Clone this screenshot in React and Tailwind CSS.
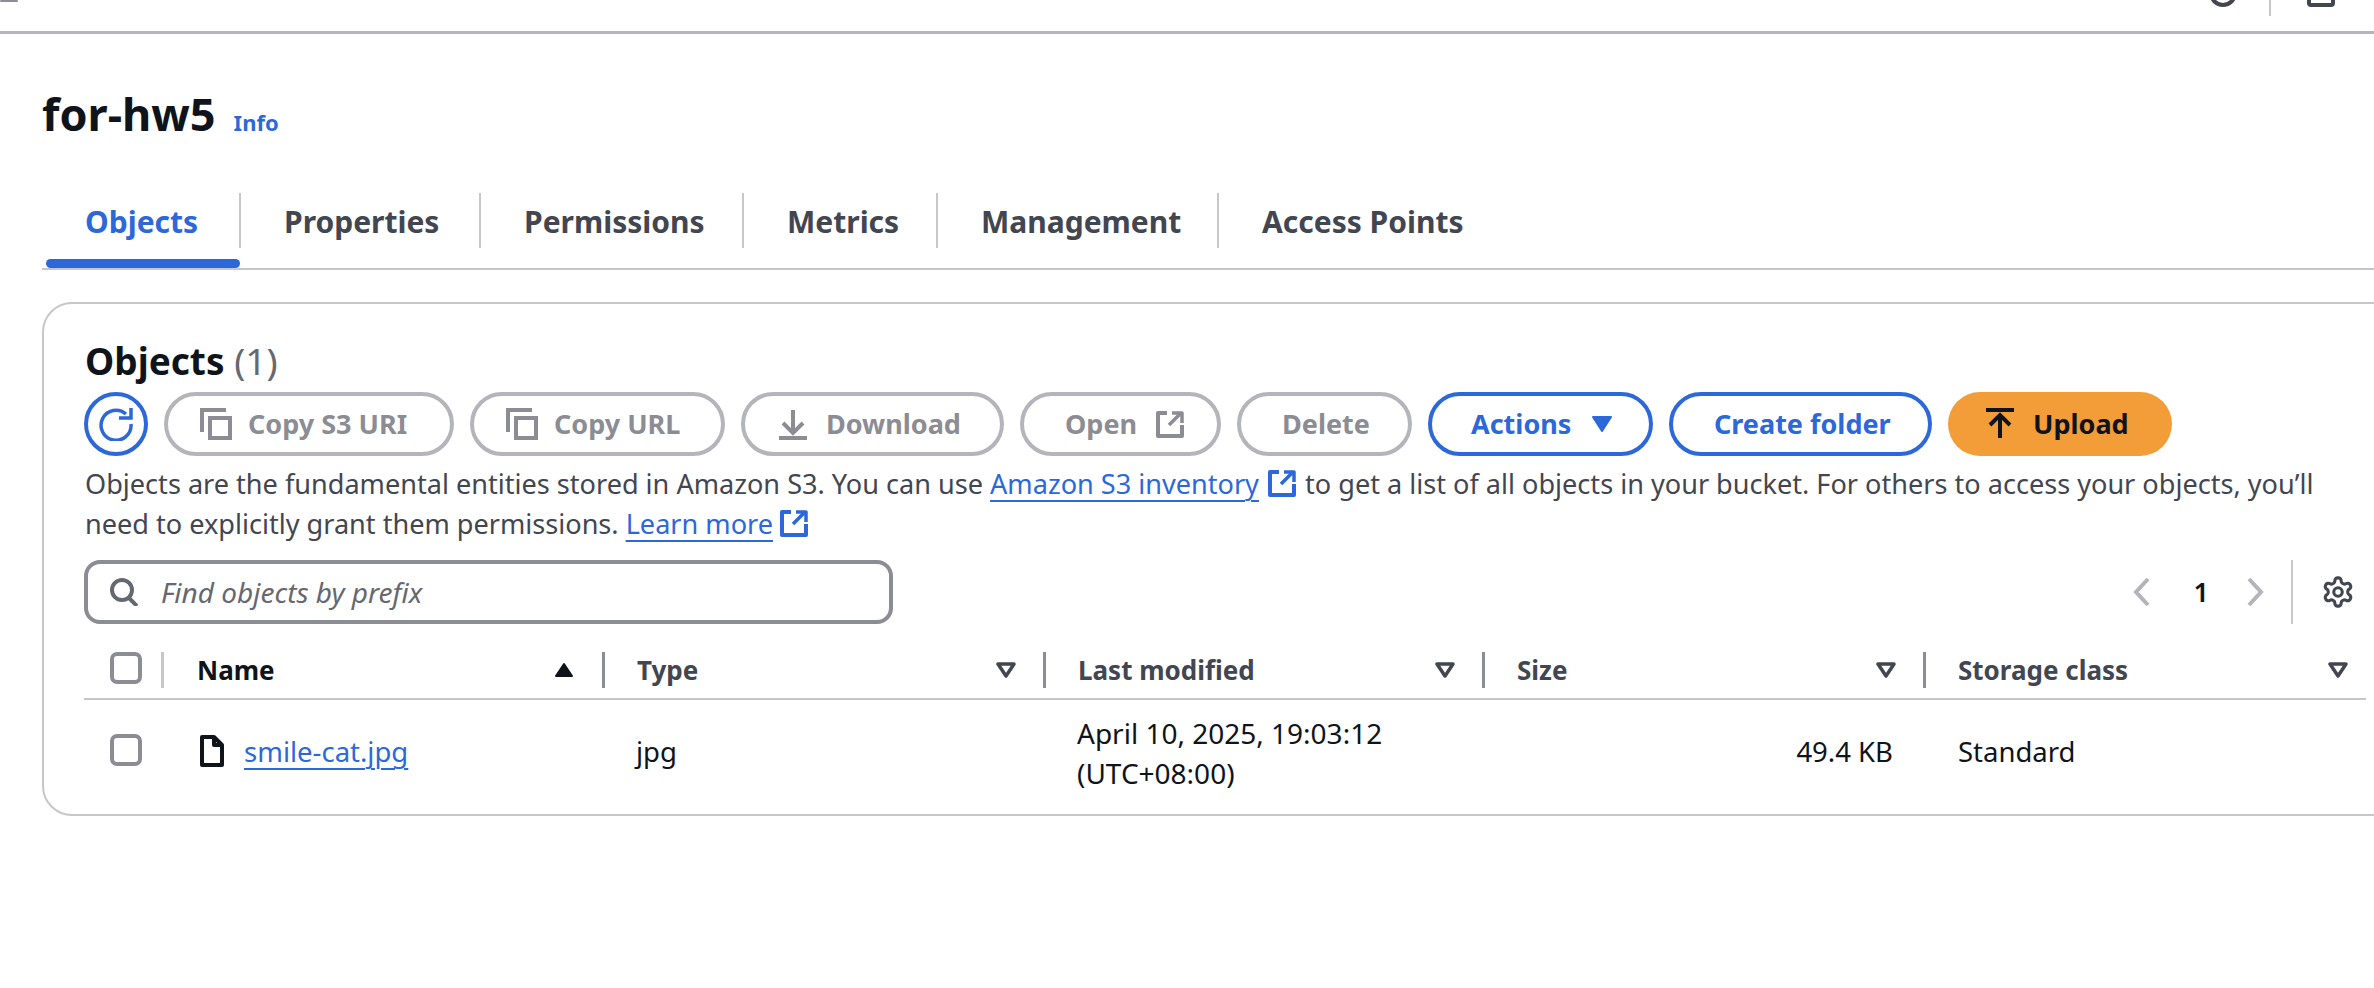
const FONT = "font-['Noto_Sans',sans-serif]"

// AWS-style external link box
function ExternalIcon({ className = '' }) {
  return (
    <svg viewBox="0 0 28 28" className={className} fill="none" stroke="currentColor" strokeWidth="4" strokeLinejoin="round">
      <path d="M11 3H2v23h24V15" />
      <path d="M16 3h10v10" strokeWidth="3.5" />
      <path d="M25 3L13 15" strokeWidth="3.5" />
    </svg>
  )
}

function CopyIcon() {
  return (
    <svg viewBox="0 0 32 32" className="w-8 h-8 shrink-0" fill="none" stroke="currentColor" strokeWidth="4">
      <path d="M2 24V2h24" />
      <rect x="10" y="10" width="20" height="20" />
    </svg>
  )
}

function Caret() {
  return (
    <svg viewBox="0 0 20 16" className="w-5 h-4" fill="none" stroke="#424650" strokeWidth="3.5" strokeLinejoin="round">
      <path d="M2 2h16l-8 12z" />
    </svg>
  )
}

function Btn({ children, className, disabled }) {
  const cls = disabled
    ? 'border-[#b4b4bb] text-[#8c8c94]'
    : 'border-[#2c68d9] text-[#2c68d9]'
  return (
    <button className={`h-16 rounded-full border-4 bg-white flex items-center text-[27px] font-bold shrink-0 ${cls} ${className}`}>
      {children}
    </button>
  )
}

function Tab({ label, active, width, divider = true }) {
  return (
    <div className={`relative h-[75px] pb-[20px] flex items-center ${width}`}>
      <div className={`flex-1 h-[55px] flex items-center pl-[43px] pt-[2px] text-[30px] font-bold ${divider ? 'border-r-2 border-[#c6c6cd]' : ''} ${active ? 'text-[#2c68d9]' : 'text-[#424650]'}`}>
        {label}
      </div>
      {active && <div className="absolute left-[4px] right-[1px] bottom-0 h-[9px] rounded-full bg-[#2c68d9]" />}
    </div>
  )
}

function HeaderCell({ label, className }) {
  return (
    <div className={`h-9 flex items-center justify-between pl-[32px] border-l-[3px] border-[#8c8c94] text-[#424650] font-bold text-[26px] shrink-0 ${className}`}>
      <span>{label}</span>
      <Caret />
    </div>
  )
}

export default function App() {
  return (
    <div className={`w-[2374px] h-[988px] bg-white overflow-hidden ${FONT}`}>
      {/* top bar, cut off by the crop */}
      <div className="h-[34px] border-b-[3px] border-[#b4b4bb] flex items-start overflow-hidden pr-[39px]">
        <div className="w-[18px] h-[2px] rounded-full bg-[#8c8c94]" />
        <div className="flex-1" />
        <div className="w-[28px] h-[28px] -mt-[21px] rounded-full border-[4px] border-[#424650]" />
        <div className="w-[2px] h-[16px] bg-[#c6c6cd] ml-[32px]" />
        <div className="w-[28px] h-[28px] -mt-[21px] rounded-[4px] border-[4px] border-[#424650] ml-[36px]" />
      </div>

      <div className="pl-[42px]">
        {/* title */}
        <div className="flex items-baseline gap-[18px] mt-[50px] h-[60px]">
          <h1 className="text-[45px] font-bold text-[#0f141a] leading-[60px]">for-hw5</h1>
          <span className="text-[22px] font-bold text-[#2c68d9]">Info</span>
        </div>

        {/* tabs */}
        <div className="flex mt-[49px] border-b-[2px] border-[#c6c6cd] h-[77px]">
          <Tab label="Objects" active width="w-[199px]" />
          <Tab label="Properties" width="w-[240px]" />
          <Tab label="Permissions" width="w-[263px]" />
          <Tab label="Metrics" width="w-[194px]" />
          <Tab label="Management" width="w-[281px]" />
          <Tab label="Access Points" width="w-[300px]" divider={false} />
        </div>

        {/* objects panel */}
        <div className="mt-[32px] w-[2400px] h-[514px] border-2 border-[#c6c6cd] rounded-[30px] pl-[40px] pt-[32px]">
          <div className="pl-[1px] text-[37px] leading-[50px] font-bold text-[#0f141a]">
            Objects <span className="font-normal text-[#656871]">(1)</span>
          </div>

          <div className="flex gap-4 mt-[6px]">
            <button className="w-16 h-16 rounded-full border-4 border-[#2c68d9] text-[#2c68d9] flex items-center justify-center shrink-0">
              <svg viewBox="0 0 34 34" className="w-[34px] h-[34px]" fill="none" stroke="currentColor" strokeWidth="3.5">
                <path d="M27 7A15 15 0 1 0 32 17" />
                <path d="M20 11h12V1" />
              </svg>
            </button>
            <Btn disabled className="w-[290px] pl-8 gap-[16px]"><CopyIcon />Copy S3 URI</Btn>
            <Btn disabled className="w-[255px] pl-8 gap-[16px]"><CopyIcon />Copy URL</Btn>
            <Btn disabled className="w-[263px] pl-[34px] gap-[19px]">
              <svg viewBox="0 0 28 32" className="w-7 h-8 shrink-0" fill="none" stroke="currentColor" strokeWidth="4">
                <path d="M14 2v24M4 15l10 10 10-10" />
                <path d="M0 30h28" />
              </svg>
              Download
            </Btn>
            <Btn disabled className="w-[201px] pl-[41px] gap-[19px]">Open<ExternalIcon className="w-7 h-7 shrink-0" /></Btn>
            <Btn disabled className="w-[175px] pl-[41px]">Delete</Btn>
            <Btn className="w-[225px] pl-[39px] gap-[20px]">
              Actions
              <svg viewBox="0 0 22 18" className="w-[22px] h-[18px] shrink-0" fill="currentColor" stroke="currentColor" strokeWidth="2" strokeLinejoin="round">
                <path d="M2 2h18l-9 14z" />
              </svg>
            </Btn>
            <Btn className="w-[263px] pl-[41px]">Create folder</Btn>
            <button className="h-16 w-[224px] rounded-full bg-[#f29d38] text-[#0f141a] flex items-center pl-[38px] gap-[19px] text-[27px] font-bold shrink-0">
              <svg viewBox="0 0 28 32" className="w-7 h-8 shrink-0" fill="none" stroke="currentColor" strokeWidth="4">
                <path d="M0 2h28" />
                <path d="M14 30V8M4 17l10-10 10 10" />
              </svg>
              Upload
            </button>
          </div>

          <p className="mt-[8px] pl-[1px] w-[2251px] text-[27.1px] leading-[40px] text-[#424650]">
            Objects are the fundamental entities stored in Amazon S3. You can use{' '}
            <a className="text-[#2c68d9] underline underline-offset-[6px] decoration-2">Amazon S3 inventory</a>{' '}
            <ExternalIcon className="inline w-7 h-7 ml-[2px] mr-[2px] text-[#2c68d9] align-[-3px]" /> to get a list of all objects in your bucket. For others to access your objects, you’ll need to explicitly grant them permissions.{' '}
            <a className="text-[#2c68d9] underline underline-offset-[6px] decoration-2">Learn more</a>{' '}
            <ExternalIcon className="inline w-7 h-7 text-[#2c68d9] align-[-3px]" />
          </p>

          {/* filter + pagination */}
          <div className="flex mt-[16px] h-16 w-[2271px] items-center">
            <div className="w-[809px] h-16 border-4 border-[#8c8c94] rounded-2xl flex items-center pl-[22px] gap-[23px]">
              <svg viewBox="0 0 28 28" className="w-7 h-7 text-[#656871] shrink-0" fill="none" stroke="currentColor" strokeWidth="4">
                <circle cx="12" cy="12" r="10" /><path d="M18 19l9 9" />
              </svg>
              <span className="italic text-[28px] text-[#656871]">Find objects by prefix</span>
            </div>
            <div className="flex-1" />
            <svg viewBox="0 0 18 30" className="w-[18px] h-[30px] text-[#b4b4bb]" fill="none" stroke="currentColor" strokeWidth="4"><path d="M15 2L3 15l12 13" /></svg>
            <span className="ml-[43px] text-[27px] font-semibold text-[#0f141a]">1</span>
            <svg viewBox="0 0 18 30" className="ml-[37px] w-[18px] h-[30px] text-[#b4b4bb]" fill="none" stroke="currentColor" strokeWidth="4"><path d="M3 2l12 13L3 28" /></svg>
            <div className="ml-[27px] w-[2px] h-16 bg-[#c6c6cd]" />
            <svg viewBox="0 0 24 24" className="ml-[28px] w-[34px] h-[34px] text-[#424650]" fill="none" stroke="currentColor" strokeWidth="2.2" strokeLinecap="round" strokeLinejoin="round">
              <circle cx="12" cy="12" r="3" />
              <path d="M12.22 2h-.44a2 2 0 0 0-2 2v.18a2 2 0 0 1-1 1.73l-.43.25a2 2 0 0 1-2 0l-.15-.08a2 2 0 0 0-2.73.73l-.22.38a2 2 0 0 0 .73 2.73l.15.1a2 2 0 0 1 1 1.72v.51a2 2 0 0 1-1 1.74l-.15.09a2 2 0 0 0-.73 2.73l.22.38a2 2 0 0 0 2.73.73l.15-.08a2 2 0 0 1 2 0l.43.25a2 2 0 0 1 1 1.73V20a2 2 0 0 0 2 2h.44a2 2 0 0 0 2-2v-.18a2 2 0 0 1 1-1.73l.43-.25a2 2 0 0 1 2 0l.15.08a2 2 0 0 0 2.73-.73l.22-.39a2 2 0 0 0-.73-2.73l-.15-.08a2 2 0 0 1-1-1.74v-.5a2 2 0 0 1 1-1.74l.15-.09a2 2 0 0 0 .73-2.73l-.22-.38a2 2 0 0 0-2.73-.73l-.15.08a2 2 0 0 1-2 0l-.43-.25a2 2 0 0 1-1-1.73V4a2 2 0 0 0-2-2z" />
            </svg>
          </div>

          {/* table header */}
          <div className="mt-[28px] w-[2282px] h-[48px] border-b-2 border-[#c6c6cd] flex">
            <div className="w-[77px] h-9 flex items-start pl-[26px] shrink-0">
              <div className="w-8 h-8 rounded-[7px] border-4 border-[#8c8c94]" />
            </div>
            <div className="w-[441px] h-9 flex items-center justify-between border-l-[3px] border-[#c6c6cd] pl-[33px] pr-[28px] text-[26px] font-bold text-[#0f141a] shrink-0">
              <span>Name</span>
              <svg viewBox="0 0 20 16" className="w-5 h-4" fill="#0f141a" stroke="#0f141a" strokeWidth="2" strokeLinejoin="round"><path d="M10 2l8 12H2z" /></svg>
            </div>
            <HeaderCell label="Type" className="w-[441px] pr-[27px]" />
            <HeaderCell label="Last modified" className="w-[439px] pr-[27px]" />
            <HeaderCell label="Size" className="w-[441px] pr-[27px]" />
            <HeaderCell label="Storage class" className="w-[443px] pr-[18px]" />
          </div>

          {/* table row */}
          <div className="flex text-[27.5px] leading-[40px] text-[#0f141a] pt-[13px]">
            <div className="w-[77px] pl-[26px] pt-[21px] shrink-0">
              <div className="w-8 h-8 rounded-[7px] border-4 border-[#8c8c94]" />
            </div>
            <div className="w-[441px] pl-[39px] pt-[22px] flex gap-[20px] shrink-0">
              <svg viewBox="0 0 24 32" className="w-6 h-8 shrink-0" fill="none" stroke="#0f141a" strokeWidth="4" strokeLinejoin="round">
                <path d="M2 2h12l8 8v20H2z" /><path d="M14 2v8h8" />
              </svg>
              <a className="text-[#2c68d9] underline underline-offset-[6px] decoration-2 -mt-[3px]">smile-cat.jpg</a>
            </div>
            <div className="w-[441px] pl-[34px] pt-[19px] shrink-0">jpg</div>
            <div className="w-[439px] pl-[34px] text-[28px] shrink-0">April 10, 2025, 19:03:12<br />(UTC+08:00)</div>
            <div className="w-[441px] pr-[30px] pt-[19px] text-right shrink-0">49.4 KB</div>
            <div className="pl-[35px] pt-[19px]">Standard</div>
          </div>
        </div>
      </div>
    </div>
  )
}
